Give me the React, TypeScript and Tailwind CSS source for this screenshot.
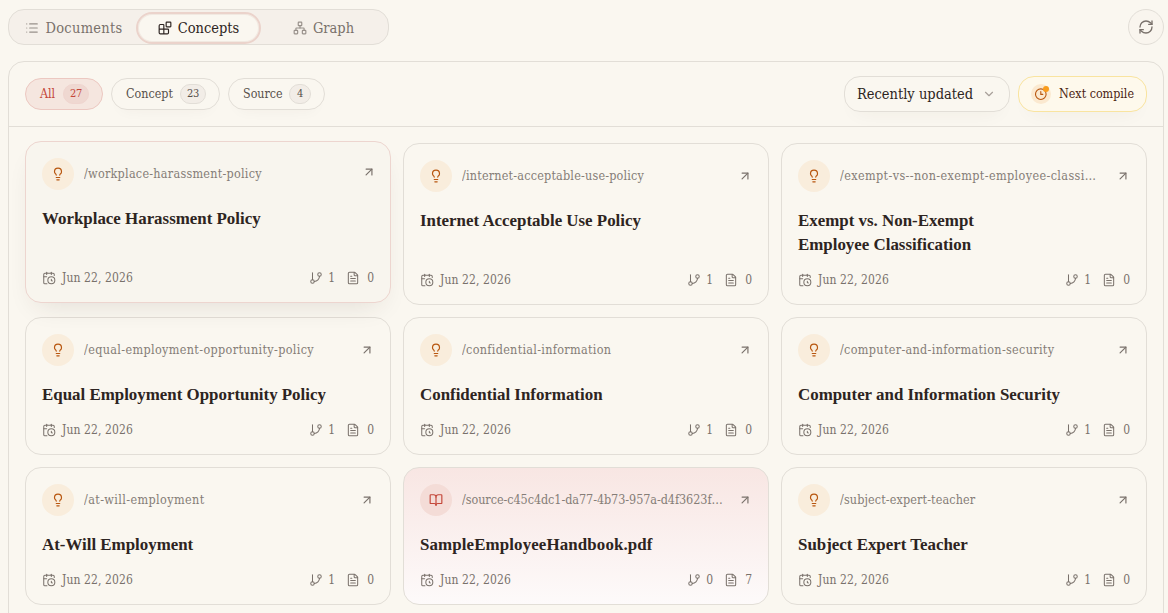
import { useState } from "react";
import {
  ArrowUpRight,
  Blocks,
  BookOpen,
  CalendarClock,
  ChevronDown,
  FileText,
  GitBranch,
  Lightbulb,
  List,
  Network,
  RefreshCw,
} from "lucide-react";
import clsx from "clsx";

interface Concept {
  slug: string;
  title: string;
  kind: "concept" | "source";
  links: number;
  docs: number;
  slugClass: string;
  active?: boolean;
}

const concepts: Concept[] = [
  { slug: "/workplace-harassment-policy", title: "Workplace Harassment Policy", kind: "concept", links: 1, docs: 0, slugClass: "tracking-[0.25px]", active: true },
  { slug: "/internet-acceptable-use-policy", title: "Internet Acceptable Use Policy", kind: "concept", links: 1, docs: 0, slugClass: "tracking-[0.19px]" },
  { slug: "/exempt-vs--non-exempt-employee-classification", title: "Exempt vs. Non-Exempt Employee Classification", kind: "concept", links: 1, docs: 0, slugClass: "pr-[4px] tracking-[0.38px]" },
  { slug: "/equal-employment-opportunity-policy", title: "Equal Employment Opportunity Policy", kind: "concept", links: 1, docs: 0, slugClass: "tracking-[0.35px]" },
  { slug: "/confidential-information", title: "Confidential Information", kind: "concept", links: 1, docs: 0, slugClass: "tracking-[0.3px]" },
  { slug: "/computer-and-information-security", title: "Computer and Information Security", kind: "concept", links: 1, docs: 0, slugClass: "tracking-[0.32px]" },
  { slug: "/at-will-employment", title: "At-Will Employment", kind: "concept", links: 1, docs: 0, slugClass: "tracking-[0.38px]" },
  { slug: "/source-c45c4dc1-da77-4b73-957a-d4f3623f9b10", title: "SampleEmployeeHandbook.pdf", kind: "source", links: 0, docs: 7, slugClass: "tracking-[-0.06px]" },
  { slug: "/subject-expert-teacher", title: "Subject Expert Teacher", kind: "concept", links: 1, docs: 0, slugClass: "tracking-[0.11px]" },
];

const filters = [
  { name: "All", count: 27, width: "w-[78px]" },
  { name: "Concept", count: 23, width: "w-[109px]" },
  { name: "Source", count: 4, width: "w-[97px]" },
];

const tabs = [
  { name: "Documents", icon: List, width: "w-[127px] pl-[3px] tracking-[0.3px]" },
  { name: "Concepts", icon: Blocks, width: "w-[125px]" },
  { name: "Graph", icon: Network, width: "w-[125px]" },
];

function ConceptCard({ item }: { item: Concept }) {
  const source = item.kind === "source";
  const Icon = source ? BookOpen : Lightbulb;

  return (
    <article
      className={clsx(
        "flex min-w-0 flex-col rounded-2xl border p-4",
        item.active
          ? "-translate-y-0.5 border-[#edd5cf] bg-[#f8f5ee] shadow-[0_12px_28px_-12px_rgba(60,45,35,0.14)]"
          : "border-[#e2ded7]",
        source && "bg-linear-to-b from-[#f8e6e3] to-[#fdfafa]"
      )}
    >
      <div className="flex h-8 items-center">
        <span
          className={clsx(
            "flex size-8 shrink-0 items-center justify-center rounded-full",
            source ? "bg-[#f4dcd7] text-[#c4473a]" : "bg-[#f9eddc] text-[#b8560f]"
          )}
        >
          <Icon className="size-3.5" strokeWidth={2} />
        </span>
        <span
          className={clsx(
            "ml-2.5 w-[262px] truncate text-[12.5px] leading-[14px] text-[#857d77]",
            item.slugClass
          )}
        >
          {item.slug}
        </span>
        <ArrowUpRight
          className={clsx(
            "ml-auto size-3.5 shrink-0 text-[#79716b]",
            item.active && "translate-x-0.5 -translate-y-0.5"
          )}
        />
      </div>

      <h3
        className={clsx(
          "mt-[17px] max-w-[300px] text-balance font-['Liberation_Serif',serif] text-[16.9px] font-bold leading-6 text-[#2d2421]",
          source && "tracking-[0.12px]"
        )}
      >
        {item.title}
      </h3>

      <div className="mt-auto flex h-4 items-center text-[12px] text-[#79716b]">
        <CalendarClock className="size-3.5" strokeWidth={1.75} />
        <span className="ml-1.5 tracking-[0.1px]">Jun 22, 2026</span>
        <GitBranch className="ml-auto size-3.5" strokeWidth={1.75} />
        <span className="ml-[5px]">{item.links}</span>
        <FileText className="ml-[11px] size-3.5" strokeWidth={1.75} />
        <span className="ml-[7px]">{item.docs}</span>
      </div>
    </article>
  );
}

export default function App() {
  const [tab, setTab] = useState("Concepts");
  const [filter, setFilter] = useState("All");

  return (
    <div className="h-screen overflow-hidden bg-[#faf7f0] pl-2 pr-1 pt-[9px] font-['DejaVu_Serif_Condensed','DejaVu_Serif',serif] text-[#2d2421]">
      {/* View switcher */}
      <div className="flex items-center justify-between">
        <nav className="flex h-9 w-[381px] items-center rounded-2xl border border-[#e2ded7] bg-[#f5f0ea] pt-px">
          {tabs.map(({ name, icon: Icon, width }) => (
            <button
              key={name}
              onClick={() => setTab(name)}
              className={clsx(
                "flex h-8 items-center justify-center gap-1.5 rounded-2xl text-[14.5px]",
                width,
                tab === name
                  ? "border-2 border-[#ebd3cb] bg-[#faf7f0] text-[#2d2421] shadow-[inset_0_0_0_1px_#f1e9e1]"
                  : "text-[#79716b]"
              )}
            >
              <Icon className={clsx("size-3.5", tab !== name && "opacity-75")} />
              <span className="pt-0.5">{name}</span>
            </button>
          ))}
        </nav>
        <button
          aria-label="Refresh"
          className="flex size-9 items-center justify-center rounded-full border border-[#e2ded7] bg-[#f9f5ee] text-[#79716b]"
        >
          <RefreshCw className="size-4" strokeWidth={2} />
        </button>
      </div>

      <section className="mt-4 h-[700px] rounded-2xl border border-[#e2ded7]">
        {/* Toolbar */}
        <div className="flex h-[65px] items-center justify-between border-b border-[#e2ded7] px-4">
          <div className="flex gap-2">
            {filters.map(({ name, count, width }) => (
              <button
                key={name}
                onClick={() => setFilter(name)}
                className={clsx(
                  "flex h-8 items-center justify-between rounded-full border pl-[14px] pr-[13px] text-[12.4px]",
                  width,
                  filter === name
                    ? "border-[#ecc8c1] bg-[#f5e6df] text-[#c4473a]"
                    : "border-[#e2ded7] text-[#57504b] shadow-[0_8px_16px_-10px_rgba(60,45,35,0.06)]"
                )}
              >
                {name}
                <span
                  className={clsx(
                    "flex h-5 items-center justify-center rounded-full border text-[11px] tracking-[-0.3px]",
                    count > 9 ? "w-[26px]" : "w-[22px]",
                    filter === name
                      ? "border-[#efd5cf] bg-[#efd8d1]"
                      : "border-[#e2ded7] bg-[#f2ede7]"
                  )}
                >
                  {count}
                </span>
              </button>
            ))}
          </div>
          <div className="flex gap-2">
            <button className="flex h-9 w-[166px] items-center justify-between rounded-2xl border border-[#e2ded7] pl-3 pr-[13px] text-[14.5px] shadow-[0_10px_20px_-12px_rgba(60,45,35,0.08)]">
              <span className="pt-0.5">Recently updated</span>
              <ChevronDown className="size-3.5 text-[#a8a09a]" />
            </button>
            <button className="flex h-9 w-[129px] items-center rounded-2xl border border-[#f9e4a0] bg-[#fef9ec] pl-3 text-[12.4px] text-[#4a2413] shadow-[0_10px_20px_-12px_rgba(60,45,35,0.08)]">
              <span className="relative flex size-5 items-center justify-center rounded-full bg-[#fbe9d0] text-[#b8560f]">
                <svg
                  className="size-3.5"
                  viewBox="0 0 14 14"
                  fill="none"
                  stroke="currentColor"
                  strokeWidth={1.1}
                  strokeLinecap="round"
                >
                  <circle cx="6.8" cy="7.2" r="5.3" />
                  <path d="M6.8 4.5v2.9h2" />
                </svg>
                <span className="absolute right-0.5 top-0.5 size-1.5 rounded-full bg-[#f99c1c]" />
              </span>
              <span className="ml-2 whitespace-nowrap">Next compile</span>
            </button>
          </div>
        </div>

        {/* Cards */}
        <div className="grid grid-cols-3 grid-rows-[162px_138px_138px] gap-3 p-4">
          {concepts.map((item) => (
            <ConceptCard key={item.slug} item={item} />
          ))}
        </div>
      </section>
    </div>
  );
}
